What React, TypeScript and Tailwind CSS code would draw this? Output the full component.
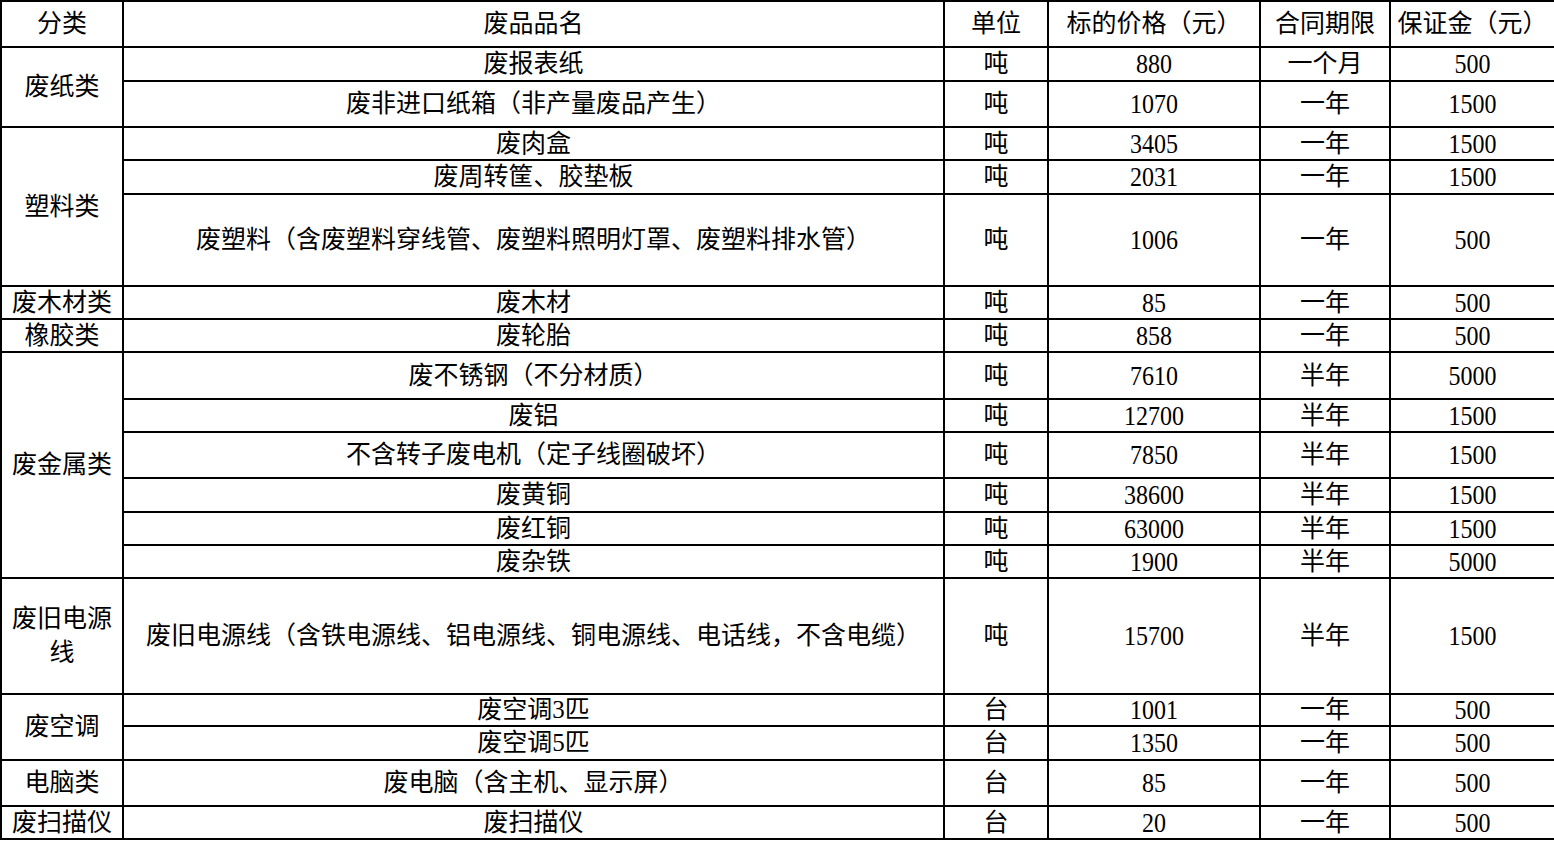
import React from "react";

type Item = { name: string; unit: string; price: string; term: string; deposit: string; h: number };
type Group = { cat: string; items: Item[] };

const groups: Group[] = [
  {
    cat: "废纸类",
    items: [
      { name: "废报表纸", unit: "吨", price: "880", term: "一个月", deposit: "500", h: 34 },
      { name: "废非进口纸箱（非产量废品产生）", unit: "吨", price: "1070", term: "一年", deposit: "1500", h: 46 },
    ],
  },
  {
    cat: "塑料类",
    items: [
      { name: "废肉盒", unit: "吨", price: "3405", term: "一年", deposit: "1500", h: 33 },
      { name: "废周转筐、胶垫板", unit: "吨", price: "2031", term: "一年", deposit: "1500", h: 34 },
      { name: "废塑料（含废塑料穿线管、废塑料照明灯罩、废塑料排水管）", unit: "吨", price: "1006", term: "一年", deposit: "500", h: 92 },
    ],
  },
  { cat: "废木材类", items: [{ name: "废木材", unit: "吨", price: "85", term: "一年", deposit: "500", h: 33 }] },
  { cat: "橡胶类", items: [{ name: "废轮胎", unit: "吨", price: "858", term: "一年", deposit: "500", h: 33 }] },
  {
    cat: "废金属类",
    items: [
      { name: "废不锈钢（不分材质）", unit: "吨", price: "7610", term: "半年", deposit: "5000", h: 47 },
      { name: "废铝", unit: "吨", price: "12700", term: "半年", deposit: "1500", h: 33 },
      { name: "不含转子废电机（定子线圈破坏）", unit: "吨", price: "7850", term: "半年", deposit: "1500", h: 46 },
      { name: "废黄铜", unit: "吨", price: "38600", term: "半年", deposit: "1500", h: 34 },
      { name: "废红铜", unit: "吨", price: "63000", term: "半年", deposit: "1500", h: 33 },
      { name: "废杂铁", unit: "吨", price: "1900", term: "半年", deposit: "5000", h: 33 },
    ],
  },
  {
    cat: "废旧电源线",
    items: [
      { name: "废旧电源线（含铁电源线、铝电源线、铜电源线、电话线，不含电缆）", unit: "吨", price: "15700", term: "半年", deposit: "1500", h: 116 },
    ],
  },
  {
    cat: "废空调",
    items: [
      { name: "废空调3匹", unit: "台", price: "1001", term: "一年", deposit: "500", h: 32 },
      { name: "废空调5匹", unit: "台", price: "1350", term: "一年", deposit: "500", h: 34 },
    ],
  },
  { cat: "电脑类", items: [{ name: "废电脑（含主机、显示屏）", unit: "台", price: "85", term: "一年", deposit: "500", h: 46 }] },
  { cat: "废扫描仪", items: [{ name: "废扫描仪", unit: "台", price: "20", term: "一年", deposit: "500", h: 33 }] },
];

const td = "border-2 border-black p-0 text-center align-middle";

function Num({ v }: { v: string }) {
  return <span className="inline-block text-[24px] scale-y-[1.12]">{v}</span>;
}

export default function App() {
  return (
    <div className="bg-white w-[1554px] h-[853px] overflow-hidden text-black font-['Liberation_Serif','Noto_Sans_CJK_SC',serif] text-[25px] leading-[26px]">
      <table className="table-fixed border-collapse w-[1554px]">
        <colgroup>
          <col className="w-[122px]" />
          <col className="w-[821px]" />
          <col className="w-[104px]" />
          <col className="w-[212px]" />
          <col className="w-[130px]" />
          <col className="w-[165px]" />
        </colgroup>
        <tbody>
          <tr className="h-[46px]">
            <td className={td}>分类</td>
            <td className={td}>废品品名</td>
            <td className={td}>单位</td>
            <td className={td}>标的价格（元）</td>
            <td className={td}>合同期限</td>
            <td className={td}>保证金（元）</td>
          </tr>
          {groups.map((g) =>
            g.items.map((it, i) => (
              <tr key={g.cat + i} style={{ height: it.h }}>
                {i === 0 && (
                  <td
                    rowSpan={g.items.length}
                    className={td + (g.cat === "废旧电源线" ? " leading-[34px] px-[6px]" : "")}
                  >
                    {g.cat}
                  </td>
                )}
                <td className={td}>{it.name}</td>
                <td className={td}>{it.unit}</td>
                <td className={td}>
                  <Num v={it.price} />
                </td>
                <td className={td}>{it.term}</td>
                <td className={td}>
                  <Num v={it.deposit} />
                </td>
              </tr>
            ))
          )}
        </tbody>
      </table>
    </div>
  );
}
